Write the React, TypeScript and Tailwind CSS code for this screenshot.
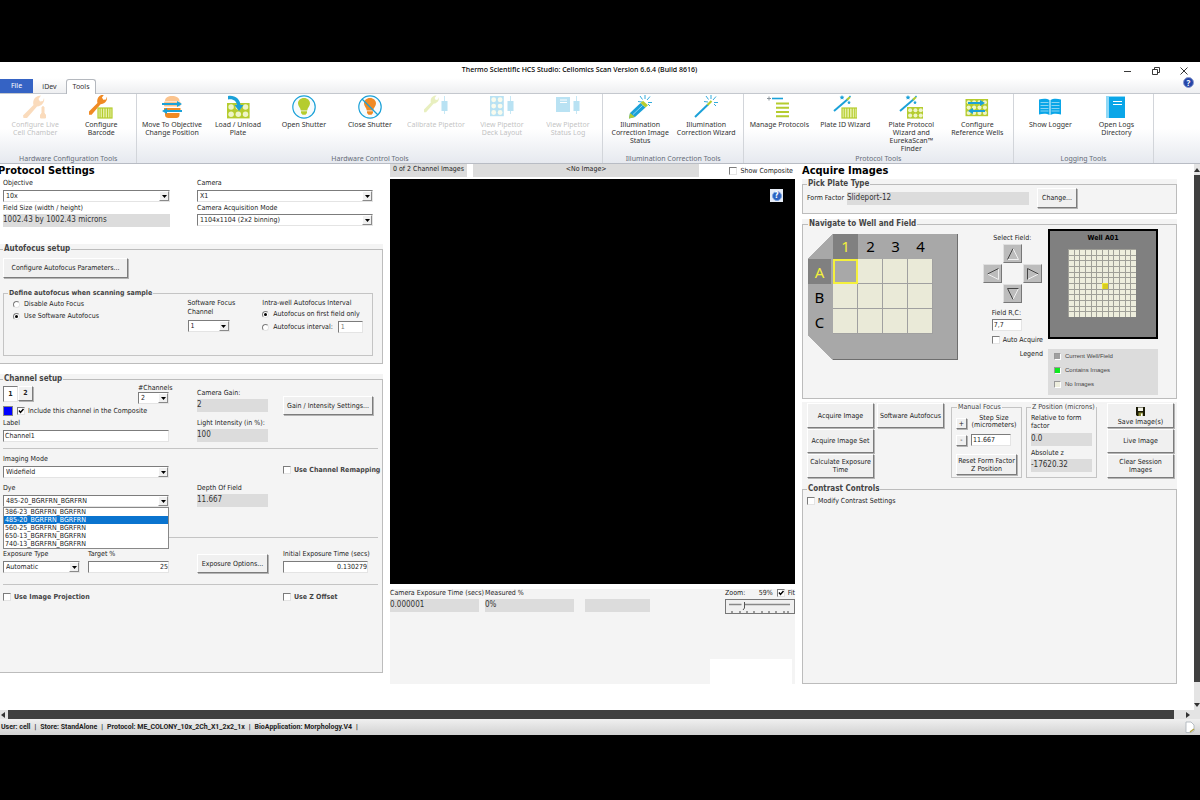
import { useState } from 'react';
import type { ReactNode } from 'react';
import clsx from 'clsx';

const BLUE = '#1ba1d8';
const GREEN = '#b5cc2e';
const ORANGE = '#f08a24';

const raised = 'border border-t-white border-l-white border-r-[#7c7c7c] border-b-[#7c7c7c] bg-[#f0f0f0] shadow-[1px_1px_0_#b4b4b4]';
const sunken = 'border border-t-[#7c7c7c] border-l-[#7c7c7c] border-r-[#e4e4e4] border-b-[#e4e4e4] bg-white';

/* ---------- ribbon icons ---------- */

function Icon({ children }: { children: ReactNode }) {
  return (
    <svg viewBox="0 0 24 24" className="size-6" fill="none" aria-hidden="true">
      {children}
    </svg>
  );
}

function Wrench({ color }: { color: string }) {
  return (
    <path
      d="M0 20.500L10.500 10C9.500 6.500 11 2.500 15 1L18 0.500L15.500 4L17 6.500L20 6L21 3C22 7 19 11 14 11.500L4 23L0.500 23Z"
      fill={color}
    />
  );
}

function Wells({ x, y, cols, rows, step, color }: { x: number; y: number; cols: number; rows: number; step: number; color: string }) {
  return (
    <>
      <rect x={x} y={y} width={cols * step + 1} height={rows * step + 1} fill={color} />
      {Array.from({ length: cols * rows }, (_, i) => (
        <circle
          key={i}
          cx={x + 0.5 + step * ((i % cols) + 0.5)}
          cy={y + 0.5 + step * (Math.floor(i / cols) + 0.5)}
          r={step * 0.38}
          fill="#eef5c8"
        />
      ))}
    </>
  );
}

function Barcode({ x, y, w, h }: { x: number; y: number; w: number; h: number }) {
  return (
    <>
      <rect x={x} y={y} width={w} height={h} fill="#e6f0a8" stroke={GREEN} strokeWidth="1.2" />
      {[0.15, 0.32, 0.5, 0.68, 0.85].map((f) => (
        <path key={f} d={`M${x + w * f} ${y}v${h}`} stroke={GREEN} strokeWidth="1.1" />
      ))}
    </>
  );
}

function WandStars() {
  return (
    <>
      <path d="M1 16L15 4" stroke={BLUE} strokeWidth="2" />
      <path d="M14 4.800L17 2" stroke={GREEN} strokeWidth="2" />
      <path d="M9 0l.7 1.500 1.700.2-1.200 1.200.3 1.700L9 3.800l-1.500.8.3-1.700L6.600 1.700l1.700-.2z" fill={BLUE} />
      <path d="M16 5.500l.6 1.200 1.300.2-1 .9.300 1.400-1.200-.7-1.200.7.3-1.400-1-.9 1.300-.2z" fill={BLUE} />
      <path d="M17 0.500l1 1-1 1-1-1z" fill={BLUE} />
    </>
  );
}

function Sparks() {
  return <path d="M17 0v4M12 1l2.500 3.500M10 6.500l4 .5M22 1.500L19 5M24 7.500h-4M20 9l2 2" stroke={BLUE} strokeWidth="0.9" />;
}

function Arrows({ x1, x2, y1, y2 }: { x1: number; x2: number; y1: number; y2: number }) {
  return (
    <>
      <path d={`M${x1} ${y1}H${x2 - 3}M${x1 + 3} ${y2}H${x2}`} stroke={BLUE} strokeWidth="1.8" />
      <path d={`M${x2 - 5} ${y1 - 3}L${x2} ${y1}L${x2 - 5} ${y1 + 3}ZM${x1 + 5} ${y2 - 3}L${x1} ${y2}L${x1 + 5} ${y2 + 3}Z`} fill={BLUE} />
    </>
  );
}

function Bulb({ color }: { color: string }) {
  return (
    <>
      <circle cx="12" cy="12" r="11.200" fill="#f6fbfd" stroke={BLUE} strokeWidth="1.200" />
      <path d="M12 3C8.500 3 6 5.400 6 8.500C6 11.300 8.500 12.500 8.800 15.500H15.200C15.500 12.500 18 11.300 18 8.500C18 5.400 15.500 3 12 3Z" fill={color} />
      <path d="M9 16.300h6v1.800l-1.500 1.700h-3L9 18.100z" fill={color} />
    </>
  );
}

function Pipettor() {
  return (
    <>
      <path d="M20.500 1v5M20.500 16v3" stroke={BLUE} strokeWidth="0.8" />
      <rect x="17.500" y="6" width="6" height="10" fill={BLUE} />
    </>
  );
}

const icons: Record<string, ReactNode> = {
  cellChamber: (
    <Icon>
      <Wrench color={ORANGE} />
      <path d="M20 11v5M19 12h2v6l1.500 2v3h-5v-3l1.500-2z" stroke={ORANGE} fill={ORANGE} />
    </Icon>
  ),
  barcode: (
    <Icon>
      <g transform="translate(-1 -1) scale(0.9)">
        <Wrench color={ORANGE} />
      </g>
      <Barcode x={9} y={13} w={14} h={10} />
    </Icon>
  ),
  objective: (
    <Icon>
      <path d="M5 6C5 2.500 8 1 12 1s7.500 1.500 7.500 5z" fill="#fbc48e" />
      <rect x="4" y="6.500" width="16.500" height="5" rx="1" fill="#fbc48e" />
      <path d="M4 13h16.500v3.500H4zM5 18h14.500v2c0 2-1.500 3-3 3h-8c-2 0-3.500-1-3.500-3z" fill={ORANGE} />
      <Arrows x1={2} x2={22} y1={9} y2={16} />
    </Icon>
  ),
  plate: (
    <Icon>
      <Wells x={1} y={8} cols={3} rows={2} step={7.2} color={GREEN} />
      <path d="M2 1C9 0 14 4 14.500 10h3L13 16L8.500 10H11C10.500 6 7 3.500 2 4.500Z" fill={BLUE} />
    </Icon>
  ),
  open: (
    <Icon>
      <Bulb color={GREEN} />
    </Icon>
  ),
  close: (
    <Icon>
      <Bulb color={ORANGE} />
      <path d="M4 4l16 16" stroke={BLUE} strokeWidth="1.300" />
    </Icon>
  ),
  calibrate: (
    <Icon>
      <g transform="translate(-1 0) scale(0.75)">
        <Wrench color={GREEN} />
      </g>
      <Pipettor />
    </Icon>
  ),
  deck: (
    <Icon>
      <Wells x={0} y={1} cols={2} rows={3} step={6.4} color={BLUE} />
      <Pipettor />
    </Icon>
  ),
  statusLog: (
    <Icon>
      <rect x="0" y="2" width="14" height="15" fill={BLUE} />
      <path d="M4 5h7M4 7.500h7" stroke="white" />
      <Pipettor />
    </Icon>
  ),
  pencil: (
    <Icon>
      <Sparks />
      <path d="M2 18L12.500 8L17.500 12.500L7 22L1 23.500Z" fill={BLUE} />
      <path d="M12.500 8l2.500-2.200 5 4.400-2.500 2.300z" fill={GREEN} />
      <path d="M2 18l-1 5.500L7 22z" fill={GREEN} />
      <path d="M5 19.500L14.500 10.500" stroke="#8fd4f0" />
    </Icon>
  ),
  wand: (
    <Icon>
      <Sparks />
      <path d="M1 22L14 9.500" stroke={BLUE} strokeWidth="2" />
      <path d="M13.500 10L17.500 6" stroke={GREEN} strokeWidth="2.200" />
    </Icon>
  ),
  protocols: (
    <Icon>
      <path d="M0 3.500h4M2 1.500v4" stroke="#8a949c" />
      <path d="M5 3.500h11" stroke={BLUE} strokeWidth="1.600" />
      <path d="M9 8.500h13M9 12.700h13M9 17h13M9 21.200h13" stroke={GREEN} strokeWidth="2" />
    </Icon>
  ),
  plateId: (
    <Icon>
      <WandStars />
      <Barcode x={9} y={13} w={15} h={10} />
    </Icon>
  ),
  plateProtocol: (
    <Icon>
      <WandStars />
      <Wells x={8} y={12} cols={3} rows={2} step={5.3} color={GREEN} />
    </Icon>
  ),
  reference: (
    <Icon>
      <Wells x={0.5} y={4} cols={4} rows={3} step={5.4} color={GREEN} />
      <Arrows x1={3} x2={20} y1={8} y2={16} />
    </Icon>
  ),
  logger: (
    <Icon>
      <path d="M1 4.500C5 3.500 9 3.500 11.500 5V20C9 18.500 5 18.500 1 19.500ZM12.500 5C15 3.500 19 3.500 23 4.500V19.500C19 18.500 15 18.500 12.500 20Z" fill="#0aa6e8" />
      <path d="M2.500 7.500h8M2.500 10.500h8M2.500 13.500h8M2.500 16h8M13.500 7.500h8M13.500 10.500h8M13.500 13.500h8M13.500 16h8" stroke="#bfe8f8" strokeWidth="0.7" />
    </Icon>
  ),
  logs: (
    <Icon>
      <rect x="2" y="1" width="19" height="22" fill="#8fd8f6" />
      <rect x="5" y="2" width="16" height="21" fill="#0aa6e8" />
      <path d="M9 6.500h9M9 9.500h9" stroke="white" />
    </Icon>
  ),
};

interface Tool {
  icon: string;
  label: string;
  disabled?: boolean;
}

interface Group {
  title: string;
  grow: string;
  tools: Tool[];
}

const groups: Group[] = [
  {
    title: 'Hardware Configuration Tools',
    grow: 'flex-[137]',
    tools: [
      { icon: 'cellChamber', label: 'Configure Live\nCell Chamber', disabled: true },
      { icon: 'barcode', label: 'Configure\nBarcode' },
    ],
  },
  {
    title: 'Hardware Control Tools',
    grow: 'flex-[467]',
    tools: [
      { icon: 'objective', label: 'Move To Objective\nChange Position' },
      { icon: 'plate', label: 'Load / Unload\nPlate' },
      { icon: 'open', label: 'Open Shutter' },
      { icon: 'close', label: 'Close Shutter' },
      { icon: 'calibrate', label: 'Calibrate Pipettor', disabled: true },
      { icon: 'deck', label: 'View Pipettor\nDeck Layout', disabled: true },
      { icon: 'statusLog', label: 'View Pipettor\nStatus Log', disabled: true },
    ],
  },
  {
    title: 'Illumination Correction Tools',
    grow: 'flex-[140]',
    tools: [
      { icon: 'pencil', label: 'Illumination\nCorrection Image\nStatus' },
      { icon: 'wand', label: 'Illumination\nCorrection Wizard' },
    ],
  },
  {
    title: 'Protocol Tools',
    grow: 'flex-[270]',
    tools: [
      { icon: 'protocols', label: 'Manage Protocols' },
      { icon: 'plateId', label: 'Plate ID Wizard' },
      { icon: 'plateProtocol', label: 'Plate Protocol\nWizard and\nEurekaScan™\nFinder' },
      { icon: 'reference', label: 'Configure\nReference Wells' },
    ],
  },
  {
    title: 'Logging Tools',
    grow: 'flex-[140]',
    tools: [
      { icon: 'logger', label: 'Show Logger' },
      { icon: 'logs', label: 'Open Logs\nDirectory' },
    ],
  },
];

/* ---------- form controls ---------- */

function Button({ children, className }: { children: ReactNode; className?: string }) {
  return (
    <button type="button" className={clsx(raised, 'flex flex-col items-center justify-center text-center leading-[8px]', className)}>
      {children}
    </button>
  );
}

interface SelectProps {
  id: string;
  value: string;
  className?: string;
}

function Select({ id, value, className }: SelectProps) {
  return (
    <div className={clsx('relative h-3', className)}>
      <select id={id} defaultValue={value} className={clsx(sunken, 'block h-full w-full appearance-none pl-[2px] leading-[10px]')}>
        <option>{value}</option>
      </select>
      <span className="pointer-events-none absolute inset-y-px right-px flex w-[10px] items-center justify-center border border-t-white border-l-white border-r-[#8a8a8a] border-b-[#8a8a8a] bg-[#f0f0f0]">
        <svg viewBox="0 0 5 3" className="h-[3px] w-[5px]" aria-hidden="true">
          <path d="M0 0h5L2.500 3z" fill="black" />
        </svg>
      </span>
    </div>
  );
}

interface CheckProps {
  label: string;
  checked?: boolean;
  bold?: boolean;
  className?: string;
}

function Check({ label, checked, bold, className }: CheckProps) {
  const [on, setOn] = useState(!!checked);
  return (
    <label className={clsx('flex items-center gap-[3px] whitespace-nowrap leading-[8px]', bold && 'font-bold text-[#444]', className)}>
      <span className="relative flex size-2">
        <input type="checkbox" checked={on} onChange={() => setOn(!on)} className={clsx(sunken, 'size-2 appearance-none')} />
        {on && (
          <svg viewBox="0 0 8 8" className="pointer-events-none absolute inset-0 size-2" fill="none" aria-hidden="true">
            <path d="M2 3.500L3.500 5.500L6.500 2" stroke="black" strokeWidth="1.400" />
          </svg>
        )}
      </span>
      {label}
    </label>
  );
}

function Radio({ label, name, checked }: { label: string; name: string; checked?: boolean }) {
  return (
    <label className="flex items-center gap-1 whitespace-nowrap leading-[8px]">
      <span className="relative flex size-[7px]">
        <input type="radio" name={name} defaultChecked={checked} className={clsx(sunken, 'peer size-[7px] appearance-none rounded-full')} />
        <span className="pointer-events-none absolute inset-[2px] hidden rounded-full bg-black peer-checked:block" />
      </span>
      {label}
    </label>
  );
}

function Readout({ children, className }: { children?: ReactNode; className?: string }) {
  return <output className={clsx('block h-[13px] bg-[#dcdcdc] text-[8px] leading-[11px] whitespace-nowrap text-[#333]', className)}>{children}</output>;
}

function FieldLabel({ htmlFor, children }: { htmlFor?: string; children: ReactNode }) {
  return (
    <label htmlFor={htmlFor} className="block leading-[8px] whitespace-nowrap">
      {children}
    </label>
  );
}

interface PanelProps {
  title: string;
  children: ReactNode;
  className?: string;
  flush?: boolean;
}

function Panel({ title, children, className, flush }: PanelProps) {
  return (
    <div className="bg-[#f4f4f4]">
      <fieldset className={clsx('min-w-0 border border-[#bcbcbc]', flush && 'border-l-0', className)}>
        <legend className="px-px text-[8px] leading-[10px] font-bold text-[#444]">{title}</legend>
        {children}
      </fieldset>
    </div>
  );
}

/* ---------- window chrome ---------- */

function TitleBar() {
  return (
    <div className="flex h-4 items-center font-['Noto_Sans',sans-serif]">
      <h1 className="flex-1 pl-9 text-center text-[7px] leading-4 font-medium text-black">
        Thermo Scientific HCS Studio: Cellomics Scan Version 6.6.4 (Build 8616)
      </h1>
      <div className="flex items-center gap-[15px] pt-px pr-2">
        {[
          ['Minimize', 'M1 5.500h7'],
          ['Restore', 'M1.500 3.500h5v5h-5zM3.500 3.500v-2h5v5h-2'],
          ['Close', 'M1.500 1.500l7 7M8.500 1.500l-7 7'],
        ].map(([name, d]) => (
          <button key={name} type="button" aria-label={name} className="w-[13px]">
            <svg viewBox="0 0 10 10" className="size-[10px]" fill="none">
              <path d={d} stroke="#222" strokeWidth="0.9" />
            </svg>
          </button>
        ))}
      </div>
    </div>
  );
}

function Ribbon() {
  return (
    <header className="bg-white font-['Noto_Sans',sans-serif] text-[7px]">
      <TitleBar />
      <nav className="flex h-4 items-end border-b border-[#c4c8ce] bg-linear-to-b from-white to-[#eeeff1]">
        <a href="#file" className="w-[33px] bg-[#3563c4] text-center leading-[14px] text-white">
          File
        </a>
        <a href="#idev" className="w-[33px] text-center leading-[13px] text-[#333]">
          iDev
        </a>
        <a href="#tools" className="-mb-px w-[30px] rounded-t-[3px] border border-b-0 border-[#b4b8be] bg-white text-center leading-[14px] text-[#333]">
          Tools
        </a>
        <button type="button" aria-label="Help" className="mr-[6px] mb-[5px] ml-auto flex size-[11px] items-center justify-center rounded-full border border-[#8b9bd0] bg-[#2545a8] text-[8px] font-bold text-white">
          ?
        </button>
      </nav>
      <div className="flex h-[70px] border-b border-[#b8bcc4] bg-linear-to-b from-white from-50% to-[#e6e9ef]">
        {groups.map((g) => (
          <section key={g.title} className={clsx('flex min-w-0 flex-col border-r border-[#d2d5da]', g.grow)}>
            <div className="flex flex-1 justify-center">
              {g.tools.map((t) => (
                <button
                  key={t.label}
                  type="button"
                  disabled={t.disabled}
                  className={clsx('flex w-[66px] flex-col items-center pt-px text-[#333]', t.disabled && 'opacity-30')}
                >
                  {icons[t.icon]}
                  <span className="mt-[2px] leading-[8px] whitespace-pre">{t.label}</span>
                </button>
              ))}
            </div>
            <h2 className="text-center leading-[9px] text-[#666c78]">{g.title}</h2>
          </section>
        ))}
        <div className="flex-[46]" />
      </div>
    </header>
  );
}

/* ---------- left column ---------- */

const dyes = ['386-23_BGRFRN_BGRFRN', '485-20_BGRFRN_BGRFRN', '560-25_BGRFRN_BGRFRN', '650-13_BGRFRN_BGRFRN', '740-13_BGRFRN_BGRFRN'];

const channelCols = 'grid grid-cols-[minmax(0,194fr)_minmax(0,86fr)_minmax(0,90fr)]';

function ProtocolSettings() {
  return (
    <section className="min-w-0">
      <h2 className="-ml-[2px] text-[11px] leading-[14px] font-bold text-black">Protocol Settings</h2>
      <div className="grid grid-cols-[194fr_176fr] pt-px pr-[10px] pl-[3px]">
        <div className="pr-[27px]">
          <FieldLabel htmlFor="objective">Objective</FieldLabel>
          <Select id="objective" value="10x" className="mt-[3px]" />
          <div className="mt-[2px]">
            <FieldLabel>Field Size (width / height)</FieldLabel>
          </div>
          <Readout className="mt-[2px]">1002.43 by 1002.43 microns</Readout>
        </div>
        <div>
          <FieldLabel htmlFor="camera">Camera</FieldLabel>
          <Select id="camera" value="X1" className="mt-[3px]" />
          <div className="mt-[2px]">
            <FieldLabel htmlFor="mode">Camera Acquisition Mode</FieldLabel>
          </div>
          <Select id="mode" value="1104x1104 (2x2 binning)" className="mt-[2px]" />
        </div>
      </div>

      <div className="mt-[17px]">
        <Panel title="Autofocus setup" flush className="pr-[9px] pb-[7px] pl-[3px]">
          <Button className="mt-1 h-5 w-[125px]">Configure Autofocus Parameters...</Button>
          <fieldset className="mt-[10px] min-w-0 border border-[#c4c4c4] pt-px pb-[22px]">
            <legend className="ml-[4px] px-px text-[7px] leading-[10px] font-bold text-[#444]">Define autofocus when scanning sample</legend>
            <div className="grid grid-cols-[175fr_75fr_110fr] pl-[9px]">
              <div className="flex flex-col gap-1 pt-px">
                <Radio name="autofocus" label="Disable Auto Focus" />
                <Radio name="autofocus" label="Use Software Autofocus" checked />
              </div>
              <div>
                <label htmlFor="focusChannel" className="block leading-[9px]">
                  Software Focus
                  <br />
                  Channel
                </label>
                <Select id="focusChannel" value="1" className="mt-[3px] w-[42px]" />
              </div>
              <div className="flex flex-col gap-[3px]">
                <FieldLabel>Intra-well Autofocus Interval</FieldLabel>
                <Radio name="interval" label="Autofocus on first field only" checked />
                <div className="flex items-center gap-[5px]">
                  <Radio name="interval" label="Autofocus interval:" />
                  <input aria-label="Autofocus interval" defaultValue="1" className={clsx(sunken, 'h-3 w-[25px] pl-[2px] text-[#777]')} />
                </div>
              </div>
            </div>
          </fieldset>
        </Panel>
      </div>

      <div className="mt-[10px]">
        <Panel title="Channel setup" flush className="pr-[4px] pb-[71px] pl-[3px]">
          <div className={clsx(channelCols, 'border-b border-[#c4c4c4] pr-[5px] pb-[6px]')}>
            <div className="pr-[28px]">
              <div className="flex h-5 justify-between">
                <div className="flex pt-[2px] font-bold">
                  <button type="button" className={clsx(sunken, 'h-4 w-[15px] bg-[#f8f8f8]')}>
                    1
                  </button>
                  <button type="button" className={clsx(raised, 'h-[15px] w-[15px]')}>
                    2
                  </button>
                </div>
                <div className="w-[31px]">
                  <FieldLabel htmlFor="channels">#Channels</FieldLabel>
                  <Select id="channels" value="2" />
                </div>
              </div>
              <div className="mt-[2px] flex items-center gap-1">
                <span className="size-[10px] border border-[#888] bg-[#0000ff]" />
                <Check label="Include this channel in the Composite" checked />
              </div>
              <div className="mt-[3px]">
                <FieldLabel htmlFor="label">Label</FieldLabel>
              </div>
              <input id="label" defaultValue="Channel1" className={clsx(sunken, 'mt-[3px] block h-3 w-full pl-px')} />
            </div>
            <div className="pt-[5px] pr-[15px]">
              <FieldLabel>Camera Gain:</FieldLabel>
              <Readout className="mt-[2px]">2</Readout>
              <div className="mt-[7px]">
                <FieldLabel>Light Intensity (in %):</FieldLabel>
              </div>
              <Readout className="mt-[2px]">100</Readout>
            </div>
            <Button className="mt-3 h-[19px] whitespace-nowrap">Gain / Intensity Settings...</Button>
          </div>

          <div className={clsx(channelCols, 'border-b border-[#c4c4c4] pt-[6px] pr-[5px] pb-[30px]')}>
            <div className="pr-[28px]">
              <FieldLabel htmlFor="imaging">Imaging Mode</FieldLabel>
              <Select id="imaging" value="Widefield" className="mt-[3px]" />
              <div className="mt-[6px]">
                <FieldLabel htmlFor="dye">Dye</FieldLabel>
              </div>
              <div className="relative mt-[3px]">
                <Select id="dye" value="485-20_BGRFRN_BGRFRN" />
                <ul role="listbox" aria-label="Dye" className="absolute inset-x-0 top-full z-10 border border-[#888] bg-white">
                  {dyes.map((d, i) => (
                    <li key={d} role="option" aria-selected={i === 1} className={clsx('pl-px leading-[8px]', i === 1 && 'bg-[#0a74cf] text-white')}>
                      {d}
                    </li>
                  ))}
                </ul>
              </div>
            </div>
            <div className="pt-[29px] pr-[15px]">
              <FieldLabel>Depth Of Field</FieldLabel>
              <Readout className="mt-[2px]">11.667</Readout>
            </div>
            <Check label="Use Channel Remapping" bold className="mt-[11px] self-start" />
          </div>

          <div className="grid grid-cols-[minmax(0,85fr)_minmax(0,109fr)_minmax(0,86fr)_minmax(0,90fr)] border-b border-[#c4c4c4] pt-[12px] pr-[5px] pb-[11px]">
            <div className="pr-[8px]">
              <FieldLabel htmlFor="exposureType">Exposure Type</FieldLabel>
              <Select id="exposureType" value="Automatic" className="mt-[3px]" />
            </div>
            <div className="pr-[28px]">
              <FieldLabel htmlFor="target">Target %</FieldLabel>
              <input id="target" defaultValue="25" className={clsx(sunken, 'mt-[3px] block h-3 w-full text-right')} />
            </div>
            <div className="pt-[4px] pr-[15px]">
              <Button className="h-[19px] w-full whitespace-nowrap">Exposure Options...</Button>
            </div>
            <div className="pr-[5px]">
              <FieldLabel htmlFor="initial">Initial Exposure Time (secs)</FieldLabel>
              <input id="initial" defaultValue="0.130279" className={clsx(sunken, 'mt-[3px] block h-3 w-full text-right')} />
            </div>
          </div>

          <div className="grid grid-cols-[280fr_90fr] pt-2 pr-[5px]">
            <Check label="Use Image Projection" bold />
            <Check label="Use Z Offset" bold />
          </div>
        </Panel>
      </div>
    </section>
  );
}

/* ---------- middle column ---------- */

function ImageView() {
  return (
    <section className="flex min-w-0 flex-col">
      <div className="flex items-center text-center">
        <div className="h-[13px] w-[77px] bg-[#dcdcdc] leading-[10px]">0 of 2 Channel Images</div>
        <div className="ml-[6px] h-[13px] flex-1 bg-[#dcdcdc] leading-[10px]">&lt;No Image&gt;</div>
        <Check label="Show Composite" className="mr-[2px] ml-[30px]" />
      </div>
      <div className="mt-[2px] flex h-[405px] justify-end bg-black pt-[10px] pr-3">
        <button type="button" aria-label="Image help" className="flex size-[13px] items-center justify-center bg-[#e6ecf6]">
          <span className="flex size-[10px] items-center justify-center rounded-full border border-[#7ea4e0] bg-[#2a62c0] text-[8px] leading-[8px] font-bold text-white">?</span>
        </button>
      </div>
      <div className="mt-[5px] flex flex-col bg-[#f4f4f4]">
        <div className="flex items-start">
          <div className="w-[95px] pr-[6px]">
            <FieldLabel>Camera Exposure Time (secs)</FieldLabel>
            <Readout className="mt-[2px]">0.000001</Readout>
          </div>
          <div className="w-[89px]">
            <FieldLabel>Measured %</FieldLabel>
            <Readout className="mt-[2px]">0%</Readout>
          </div>
          <Readout className="mt-[10px] ml-[11px] w-[65px]" />
          <div className="ml-auto w-[70px]">
            <div className="flex items-center justify-between leading-[8px]">
              <label htmlFor="zoom">Zoom:</label>
              <span className="ml-auto pr-1">59%</span>
              <Check label="Fit" checked />
            </div>
            <div className="relative mt-[2px] h-[15px] border border-[#777] bg-[#f0f0f0]">
              <input id="zoom" type="range" defaultValue="20" className="absolute inset-0 size-full opacity-0" />
              <svg viewBox="0 0 68 13" preserveAspectRatio="none" className="pointer-events-none size-full" fill="none" aria-hidden="true">
                <path d="M3 4.500h61" stroke="#888" strokeWidth="1.500" />
                <path d="M15.500 2h3v6l-1.500 2-1.500-2z" fill="#f0f0f0" />
                <path d="M18.500 2v6l-1.500 2" stroke="#555" />
                <path d="M6 11v2M14 11v2M21 11v2M28 11v2M36 11v2M43 11v2M50 11v2M58 11v2M62 11v2" stroke="#444" />
              </svg>
            </div>
          </div>
        </div>
        <div className="mt-[45px] mr-[3px] ml-auto h-[25px] w-[82px] bg-white" />
      </div>
    </section>
  );
}

/* ---------- right column ---------- */

function Plate() {
  return (
    <div className="bg-[#6e6e6e] pr-px pb-px [clip-path:polygon(25px_0,100%_0,100%_100%,25px_100%,0_101px,0_25px)]">
      <div className="grid grid-cols-[25px_repeat(4,25px)] bg-[#a8a8a8] pr-6 pb-[25px] text-center font-['Noto_Sans',sans-serif] text-[15px] leading-[25px] text-black">
        <span />
        {[1, 2, 3, 4].map((n) => (
          <span key={n} className={clsx('h-[25px]', n === 1 && 'bg-[#808080] text-[#f4f03c]')}>
            {n}
          </span>
        ))}
        {['A', 'B', 'C'].map((row) => (
          <div key={row} className="contents">
            <span className={clsx('mr-[2px] h-[25px] leading-[26px]', row === 'A' && 'bg-[#808080] text-[#f4f03c]')}>{row}</span>
            {[1, 2, 3, 4].map((n) => (
              <button
                key={n}
                type="button"
                aria-label={`Well ${row}${n}`}
                className={clsx(
                  'h-[25px]',
                  row === 'A' && n === 1 ? 'border-2 border-[#f4f03c] bg-[#a8a8a8]' : 'border-r border-b border-[#a0a0a0] bg-[#eaead8]',
                )}
              />
            ))}
          </div>
        ))}
      </div>
    </div>
  );
}

function Arrow({ name, d, dark, className }: { name: string; d: string; dark: string; className: string }) {
  return (
    <button
      type="button"
      aria-label={name}
      className={clsx('flex size-[19px] items-center justify-center border border-t-[#e0e0e0] border-l-[#e0e0e0] border-r-[#777] border-b-[#777] bg-[#bcbcbc]', className)}
    >
      <svg viewBox="0 0 14 14" className="size-[14px]" fill="none" aria-hidden="true">
        <path d={d} stroke="#f0f0f0" />
        <path d={dark} stroke="#444" />
      </svg>
    </button>
  );
}

function Navigate() {
  return (
    <Panel title="Navigate to Well and Field" className="pr-[18px] pb-[3px] pl-[5px]">
      <div className="flex items-start">
        <div className="pt-[5px]">
          <Plate />
        </div>
        <div className="ml-auto pt-[5px]">
          <div className="text-center">
            <FieldLabel>Select Field:</FieldLabel>
          </div>
          <div className="mt-[2px] ml-auto grid w-[60px] grid-cols-[20px_20px_20px] gap-y-px">
            <Arrow name="Up" d="M12.500 12.500L7 1.500M1.500 12.500h11" dark="M1.500 12.500L7 1.500" className="col-start-2" />
            <Arrow name="Left" d="M12.500 1.500v11L1.500 7" dark="M1.500 7L12.500 1.500" className="col-start-1" />
            <Arrow name="Right" d="M1.500 12.500L12.500 7" dark="M12.500 7L1.500 1.500v11" className="col-start-3" />
            <Arrow name="Down" d="M12.500 1.500L7 12.500" dark="M7 12.500L1.500 1.500h11" className="col-start-2" />
          </div>
          <div className="mt-[6px] pl-[10px]">
            <FieldLabel htmlFor="field">Field R,C:</FieldLabel>
            <input id="field" defaultValue="7,7" className={clsx(sunken, 'mt-[2px] block h-3 w-[30px] pl-px')} />
            <Check label="Auto Acquire" className="mt-[5px]" />
          </div>
          <div className="mt-[6px] text-right leading-[8px]">Legend</div>
        </div>
        <div className="ml-[5px] w-[110px]">
          <div className="h-[110px] border-2 border-black bg-[#808080]">
            <h3 className="pt-[3px] pb-[6px] text-center text-[7px] leading-[9px] font-bold text-black">Well A01</h3>
            <div className="ml-[18px] grid size-[68px] grid-cols-12">
              {Array.from({ length: 144 }, (_, i) => (
                <span
                  key={i}
                  className={clsx('border-t border-l', i === 78 ? 'border-[#f0e830] bg-[#d8cc20]' : 'border-[#a0a098] bg-[#eeeedd]')}
                />
              ))}
            </div>
          </div>
          <ul className="mt-[10px] flex flex-col gap-[5px] bg-[#dcdcdc] pt-[3px] pb-[6px] pl-[6px] font-['Liberation_Sans',sans-serif] text-[6px] text-[#444]">
            {[
              ['Current Well/Field', 'bg-[#a0a0a0]'],
              ['Contains Images', 'bg-[#10e820]'],
              ['No Images', 'bg-[#eeeedd]'],
            ].map(([name, color]) => (
              <li key={name} className="flex items-center gap-1 leading-[9px]">
                <span className={clsx('size-[7px] border border-t-[#999] border-l-[#999] border-r-white border-b-white', color)} />
                {name}
              </li>
            ))}
          </ul>
        </div>
      </div>
    </Panel>
  );
}

function AcquireImages() {
  return (
    <section className="flex min-w-0 flex-col">
      <h2 className="text-[11px] leading-[14px] font-bold text-black">Acquire Images</h2>
      <div className="mt-px">
        <Panel title="Pick Plate Type" className="pb-[5px] pl-[4px]">
          <div className="-mt-px flex items-center">
            <FieldLabel htmlFor="formFactor">Form Factor</FieldLabel>
            <output id="formFactor" className="ml-[3px] block h-[13px] max-w-[182px] flex-1 bg-[#dcdcdc] text-[8px] leading-[12px] text-[#333]">
              Slideport-12
            </output>
            <Button className="ml-2 h-5 w-10">Change...</Button>
          </div>
        </Panel>
      </div>
      <div className="mt-[5px]">
        <Navigate />
      </div>
      <div className="mt-[3px] flex items-start bg-[#f4f4f4] pt-px pr-[3px] pb-[6px] pl-[5px]">
        <div className="flex w-[67px] flex-col gap-px">
          <Button className="h-[25px]">Acquire Image</Button>
          <Button className="h-[24px]">Acquire Image Set</Button>
          <Button className="h-[24px] whitespace-pre">{'Calculate Exposure\nTime'}</Button>
        </div>
        <Button className="ml-[3px] h-[25px] w-[67px] whitespace-nowrap">Software Autofocus</Button>
        <fieldset className="ml-auto h-[75px] w-[71px] min-w-0 border border-[#c4c4c4] px-1 pt-[3px]">
          <legend className="ml-px px-px leading-[8px] whitespace-nowrap text-[#444]">Manual Focus</legend>
          <div className="grid grid-cols-[11px_1fr] items-center gap-x-[4px] gap-y-[5px]">
            <Button className="mt-1 h-[11px]">+</Button>
            <label htmlFor="step" className="text-center leading-[7px]">
              Step Size (micrometers)
            </label>
            <Button className="h-[11px]">-</Button>
            <input id="step" defaultValue="11.667" className={clsx(sunken, 'h-3 w-10 pl-px')} />
          </div>
          <Button className="mt-2 h-[21px] w-full whitespace-nowrap">
            <span>Reset Form Factor</span>
            <span>Z Position</span>
          </Button>
        </fieldset>
        <fieldset className="ml-[4px] h-[75px] w-[71px] min-w-0 border border-[#c4c4c4] px-1 pt-[3px]">
          <legend className="px-px leading-[8px] whitespace-nowrap text-[#444]">Z Position (microns)</legend>
          <div className="leading-[8px]">Relative to form factor</div>
          <Readout className="mt-[3px] h-[11px]">0.0</Readout>
          <div className="mt-[3px]">
            <FieldLabel>Absolute z</FieldLabel>
          </div>
          <Readout className="mt-[2px] h-[11px]">-17620.32</Readout>
        </fieldset>
        <div className="ml-[10px] flex w-[67px] flex-col gap-px">
          <Button className="h-[25px]">
            <svg viewBox="0 0 9 9" className="mt-px size-[9px]" aria-hidden="true">
              <path d="M0 0h9v9H1L0 8z" fill="#1c1c08" />
              <path d="M2 0.500h5v3.500H2z" fill="#f4f4e8" />
              <path d="M2.500 5.500h4.500V9H2.500z" fill="#8c8c30" />
              <path d="M5 6.500h1.500V9H5z" fill="white" />
            </svg>
            <span className="mt-[2px]">Save Image(s)</span>
          </Button>
          <Button className="h-[24px]">Live Image</Button>
          <Button className="h-[24px] whitespace-pre">{'Clear Session\nImages'}</Button>
        </div>
      </div>
      <Panel title="Contrast Controls" className="pb-[178px] pl-[4px]">
        <Check label="Modify Contrast Settings" className="mt-[3px]" />
      </Panel>
    </section>
  );
}

/* ---------- scroll bars and status ---------- */

function Triangle({ d }: { d: string }) {
  return (
    <svg viewBox="0 0 6 6" className="size-[6px]" aria-hidden="true">
      <path d={d} fill="#333" />
    </svg>
  );
}

const status = ['User: cell', 'Store: StandAlone', 'Protocol: ME_COLONY_10x_2Ch_X1_2x2_1x', 'BioApplication: Morphology.V4'];

export default function App() {
  return (
    <div className="min-h-screen bg-black pt-[62px] pb-[65px]">
      <Ribbon />
      <main className="flex bg-white font-['DejaVu_Sans_Condensed','DejaVu_Sans',sans-serif] text-[7px] text-[#222]">
        <div className="grid flex-1 grid-cols-[383fr_405fr_375fr] items-start gap-[7px] pr-[17px] pb-[26px]">
          <ProtocolSettings />
          <ImageView />
          <AcquireImages />
        </div>
        <div className="flex w-[6px] flex-col bg-[#e4e4e4]">
          <div className="flex h-[11px] items-center">
            <Triangle d="M0 5L3 1L6 5Z" />
          </div>
          <div className="flex-1 bg-[#404040]" />
          <div className="flex h-7 items-end pb-[2px]">
            <Triangle d="M0 1L3 5L6 1Z" />
          </div>
        </div>
      </main>
      <div className="flex h-[9px] items-center bg-[#e4e4e4]">
        <span className="w-2">
          <Triangle d="M5 0L1 3L5 6Z" />
        </span>
        <div className="h-full flex-1 bg-[#404040]" />
        <div className="flex w-[26px] justify-end pr-[9px]">
          <Triangle d="M1 0L5 3L1 6Z" />
        </div>
      </div>
      <footer className="flex h-4 items-center bg-linear-to-b from-[#f0f0f0] to-[#d2d2d2] pr-[5px] pl-px font-['Roboto',sans-serif] text-[7px] font-bold text-[#222]">
        {status.map((s) => (
          <span key={s} className="flex gap-1 pr-1">
            {s}
            <span>|</span>
          </span>
        ))}
        <svg viewBox="0 0 10 12" className="ml-auto h-3 w-[10px]" fill="none" aria-hidden="true">
          <path d="M1 1h5l3 3v6l-3 1.500H1z" fill="white" stroke="#a8b0b8" strokeWidth="0.800" />
          <path d="M5 11l4-3" stroke="#b0a040" strokeWidth="1.500" />
        </svg>
      </footer>
    </div>
  );
}
